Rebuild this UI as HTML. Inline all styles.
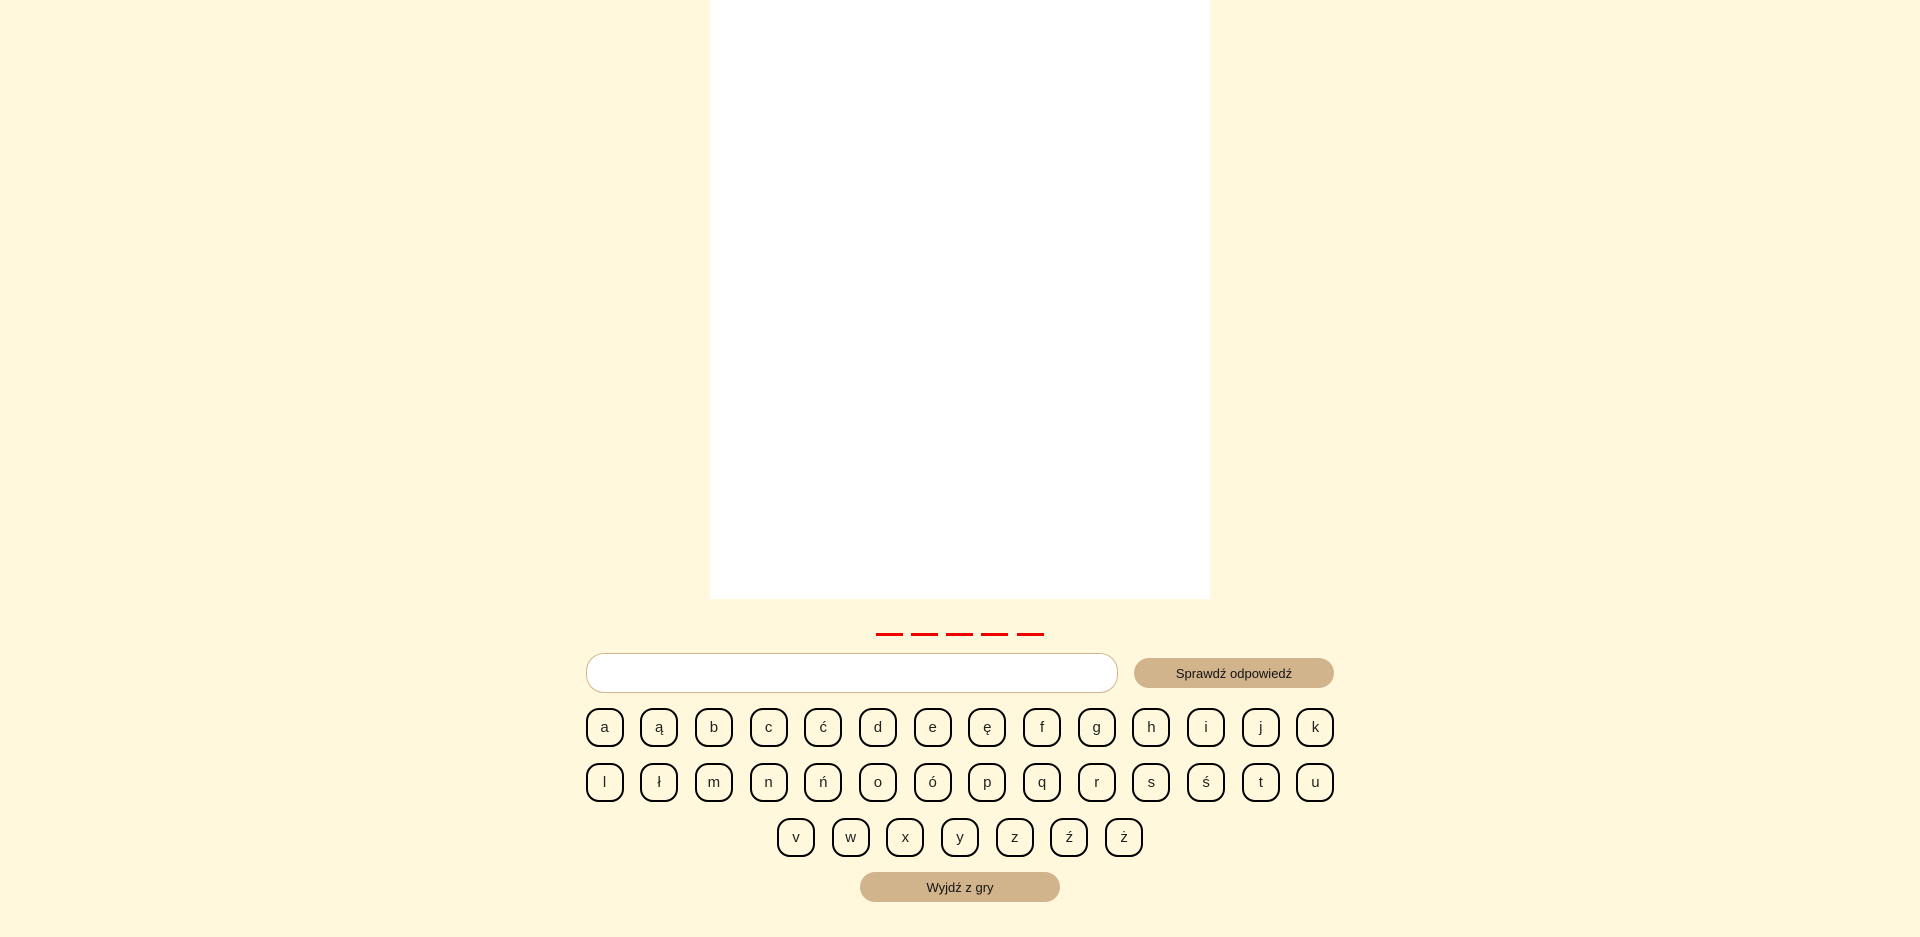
<!DOCTYPE html>
<html><head><meta charset="utf-8"><style>
body{margin:0;width:1920px;height:937px;background:#fff8dc;font-family:"Liberation Sans",sans-serif;position:relative;overflow:hidden}
.panel{position:absolute;left:710px;top:0;width:500px;height:599px;background:#fff}
.dash{position:absolute;top:633px;width:27px;height:3px;background:#e00}
.inp{position:absolute;left:586px;top:653px;width:530px;height:38px;border:1px solid #d2b48c;border-radius:18px;background:#fff}
.btn{position:absolute;background:#d2b48c;border-radius:16px;font-size:13px;color:#111;display:flex;align-items:center;justify-content:center}
.row{position:absolute;left:0;width:1920px;display:flex;justify-content:center;gap:16.7px}
.k{width:34px;height:35px;border:2px solid #000;border-radius:13px;display:flex;align-items:center;justify-content:center;font-size:15px;color:#222;box-sizing:content-box}
</style></head><body>
<div class="panel"></div>
<div class="dash" style="left:876px"></div><div class="dash" style="left:911px"></div><div class="dash" style="left:946px"></div><div class="dash" style="left:981px"></div><div class="dash" style="left:1017px"></div>
<div class="inp"></div>
<div class="btn" style="left:1134px;top:658px;width:200px;height:30px">Sprawdź odpowiedź</div>
<div class="row" style="top:708px"><div class="k">a</div><div class="k">ą</div><div class="k">b</div><div class="k">c</div><div class="k">ć</div><div class="k">d</div><div class="k">e</div><div class="k">ę</div><div class="k">f</div><div class="k">g</div><div class="k">h</div><div class="k">i</div><div class="k">j</div><div class="k">k</div></div>
<div class="row" style="top:763px"><div class="k">l</div><div class="k">ł</div><div class="k">m</div><div class="k">n</div><div class="k">ń</div><div class="k">o</div><div class="k">ó</div><div class="k">p</div><div class="k">q</div><div class="k">r</div><div class="k">s</div><div class="k">ś</div><div class="k">t</div><div class="k">u</div></div>
<div class="row" style="top:818px"><div class="k">v</div><div class="k">w</div><div class="k">x</div><div class="k">y</div><div class="k">z</div><div class="k">ź</div><div class="k">ż</div></div>
<div class="btn" style="left:860px;top:872px;width:200px;height:30px">Wyjdź z gry</div>
</body></html>
